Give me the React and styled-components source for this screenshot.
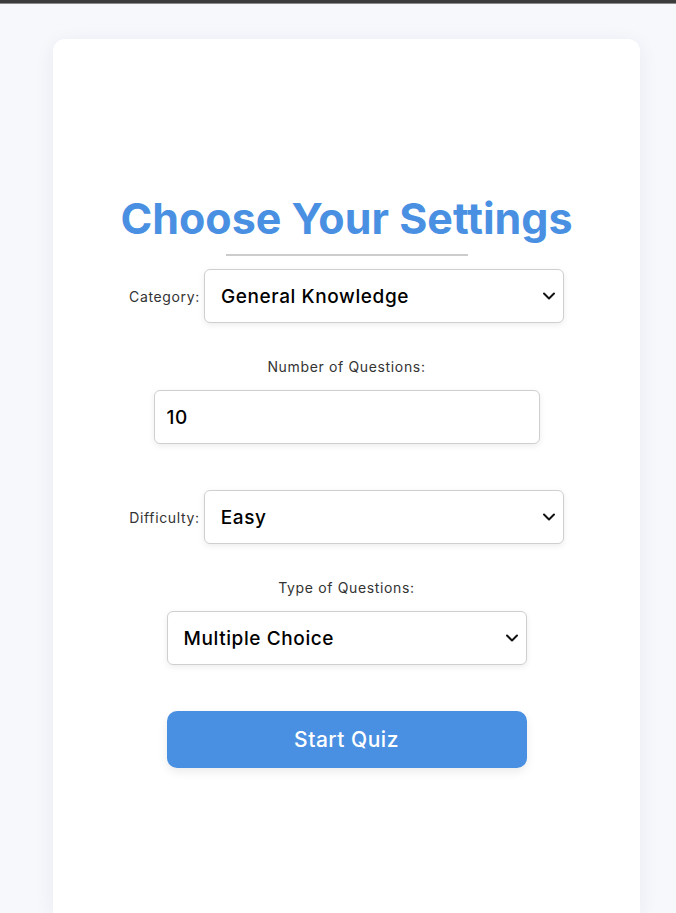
import React from "react";
import styled, { createGlobalStyle } from "styled-components";
import { ChevronDown } from "lucide-react";

const GlobalStyle = createGlobalStyle`
  html, body {
    margin: 0;
    padding: 0;
    background: #f7f8fc;
    font-family: Inter, "Liberation Sans", sans-serif;
    overflow: hidden;
  }
`;

const TopBar = styled.div`
  height: 3px;
  background: #3c3c3c;
  border-bottom: 1px solid #8a8a8a;
`;

const Page = styled.div`
  height: calc(100vh - 4px);
  box-sizing: border-box;
  display: flex;
  justify-content: center;
  padding: 35px 0 0 17px;
`;

const Card = styled.div`
  width: 587px;
  box-sizing: border-box;
  background: #fff;
  border-radius: 12px 12px 0 0;
  box-shadow: 0 4px 20px rgba(30, 40, 90, 0.07);
  padding-top: 151px;
  display: flex;
  flex-direction: column;
  align-items: center;
`;

const Title = styled.h1`
  margin: 0;
  color: #4a90e2;
  font-size: 43px;
  font-weight: 700;
  line-height: 56px;
`;

const Divider = styled.div`
  width: 242px;
  height: 2px;
  background: #cccccc;
  margin: 8px 0 13px;
`;

const Group = styled.div`
  display: flex;
  flex-direction: ${(p) => (p.$stacked ? "column" : "row")};
  align-items: center;
  gap: ${(p) => (p.$stacked ? "14px" : "4px")};
  margin-bottom: ${(p) => p.$space}px;
`;

const Label = styled.label`
  font-size: 14px;
  letter-spacing: 0.65px;
  color: #333;
  line-height: 19px;
`;

const SelectWrap = styled.div`
  position: relative;
  width: 360px;

  svg {
    position: absolute;
    right: 5px;
    top: 50%;
    transform: translateY(-50%);
    color: #111;
    pointer-events: none;
  }
`;

const fieldStyle = `
  height: 54px;
  box-sizing: border-box;
  font-family: Inter, "Liberation Sans", sans-serif;
  font-size: 19px;
  font-weight: 500;
  letter-spacing: 0.6px;
  color: #000;
  background: #fff;
  border: 1px solid #cfcfcf;
  border-radius: 6px;
  box-shadow: 0 2px 6px rgba(0, 0, 0, 0.08);
  outline: none;
`;

const Select = styled.select`
  ${fieldStyle}
  width: 100%;
  padding: 0 30px 0 16px;
  appearance: none;
  -webkit-appearance: none;
`;

const Input = styled.input`
  ${fieldStyle}
  width: 386px;
  padding: 0 12px;
`;

const StartButton = styled.button`
  width: 360px;
  height: 57px;
  border: none;
  border-radius: 10px;
  background: #4a90e2;
  color: #fff;
  font-family: Inter, "Liberation Sans", sans-serif;
  font-size: 21px;
  font-weight: 500;
  letter-spacing: 0.5px;
  box-shadow: 0 4px 10px rgba(0, 0, 0, 0.08);
  cursor: pointer;
`;

const Dropdown = ({ id, value, options }) => (
    <SelectWrap>
        <Select id={id} defaultValue={value}>
            {options.map((o) => (
                <option key={o.value} value={o.value}>{o.label}</option>
            ))}
        </Select>
        <ChevronDown size={20} strokeWidth={2.4} />
    </SelectWrap>
)

const categories = [
    { value: "9", label: "General Knowledge" },
    { value: "17", label: "Science & Nature" },
    { value: "23", label: "History" },
];

const difficulties = [
    { value: "easy", label: "Easy" },
    { value: "medium", label: "Medium" },
    { value: "hard", label: "Hard" },
];

const types = [
    { value: "multiple", label: "Multiple Choice" },
    { value: "boolean", label: "True / False" },
];

const App = () => {
    return (
        <>
            <GlobalStyle />
            <TopBar />
            <Page>
                <Card>
                    <Title>Choose Your Settings</Title>
                    <Divider />

                    <Group $space={34}>
                        <Label htmlFor="category">Category:</Label>
                        <Dropdown id="category" value="9" options={categories} />
                    </Group>

                    <Group $stacked $space={46}>
                        <Label htmlFor="amount">Number of Questions:</Label>
                        <Input id="amount" type="number" defaultValue={10} />
                    </Group>

                    <Group $space={34}>
                        <Label htmlFor="difficulty">Difficulty:</Label>
                        <Dropdown id="difficulty" value="easy" options={difficulties} />
                    </Group>

                    <Group $stacked $space={46}>
                        <Label htmlFor="type">Type of Questions:</Label>
                        <Dropdown id="type" value="multiple" options={types} />
                    </Group>

                    <StartButton>Start Quiz</StartButton>
                </Card>
            </Page>
        </>
    )
}

export default App
